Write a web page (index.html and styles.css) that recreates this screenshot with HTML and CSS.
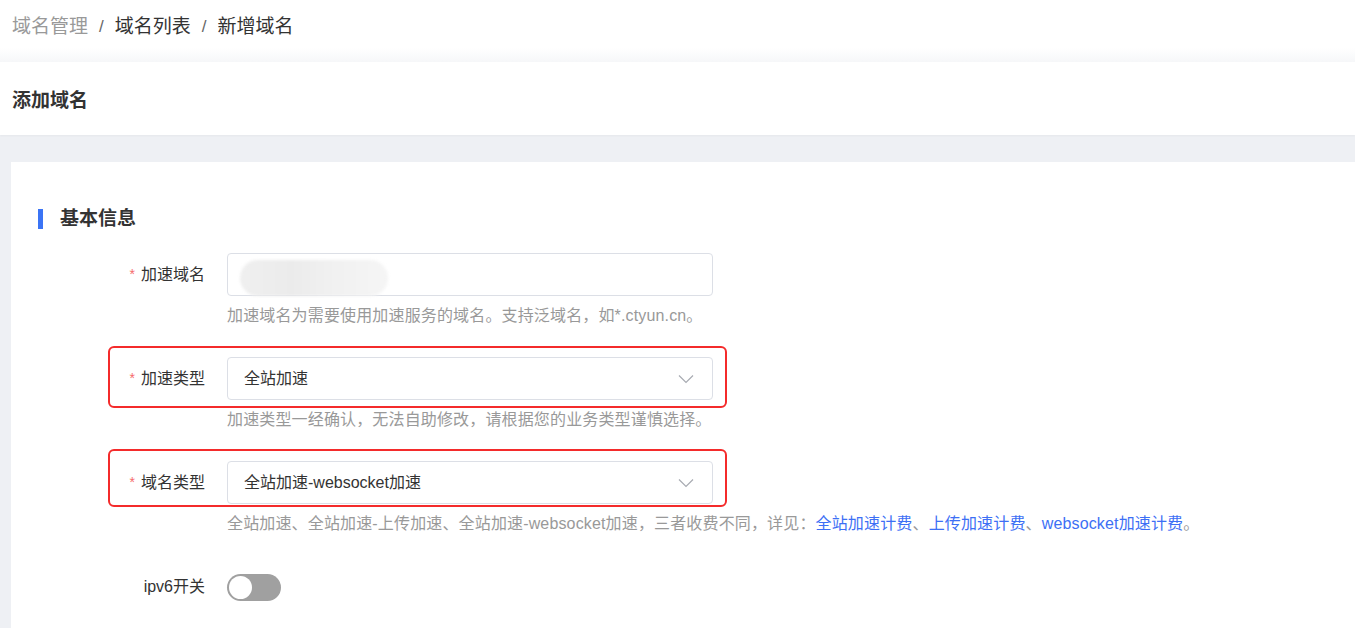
FILE: index.html
```html
<!DOCTYPE html>
<html lang="zh-CN">
<head>
  <meta charset="UTF-8">
  <meta name="viewport" content="width=device-width, initial-scale=1.0">
  <title>新增域名</title>
  <link rel="stylesheet" href="styles.css">
</head>
<body>
  <div class="crumbs">
    <span class="crumb muted">域名管理</span>
    <span class="sep">/</span>
    <span class="crumb">域名列表</span>
    <span class="sep">/</span>
    <span class="crumb">新增域名</span>
  </div>

  <div class="page-head">
    <h1>添加域名</h1>
  </div>

  <div class="main">
    <div class="card">
      <h2 class="section-title">基本信息</h2>

      <!-- 加速域名 -->
      <div class="form-item">
        <div class="form-line">
          <label class="label"><span class="req">*</span>加速域名</label>
          <div class="input">
            <span class="masked"></span>
          </div>
        </div>
        <div class="help">加速域名为需要使用加速服务的域名。支持泛域名，如*.ctyun.cn。</div>
      </div>

      <!-- 加速类型 -->
      <div class="form-item">
        <div class="form-line marked marked-a">
          <label class="label"><span class="req">*</span>加速类型</label>
          <div class="input select">
            <span>全站加速</span>
            <svg class="arrow" width="16" height="10" viewBox="0 0 16 10"><path d="M1 1.5 L8 8.5 L15 1.5" fill="none" stroke="#a8abb2" stroke-width="1.2"/></svg>
          </div>
        </div>
        <div class="help">加速类型一经确认，无法自助修改，请根据您的业务类型谨慎选择。</div>
      </div>

      <!-- 域名类型 -->
      <div class="form-item">
        <div class="form-line marked marked-b">
          <label class="label"><span class="req">*</span>域名类型</label>
          <div class="input select">
            <span>全站加速-websocket加速</span>
            <svg class="arrow" width="16" height="10" viewBox="0 0 16 10"><path d="M1 1.5 L8 8.5 L15 1.5" fill="none" stroke="#a8abb2" stroke-width="1.2"/></svg>
          </div>
        </div>
        <div class="help">全站加速、全站加速-上传加速、全站加速-websocket加速，三者收费不同，详见：<a href="#">全站加速计费</a>、<a href="#">上传加速计费</a>、<a href="#">websocket加速计费</a>。</div>
      </div>

      <!-- ipv6 -->
      <div class="form-item switch-item">
        <div class="form-line">
          <label class="label">ipv6开关</label>
          <span class="switch"><span class="knob"></span></span>
        </div>
      </div>
    </div>
  </div>
</body>
</html>
```

FILE: styles.css
```css
body {
  margin: 0;
  font-family: "Liberation Sans", "Noto Sans CJK SC", sans-serif;
  color: #333;
  background: #eef0f4;
}
.crumbs {
  height: 62px;
  padding: 0 12px;
  display: flex;
  align-items: flex-start;
  font-size: 19px;
  line-height: 53px;
  background: linear-gradient(#fff 48px, #f6f7f9 62px);
}
.crumb {
  color: #333;
}
.crumb.muted {
  color: #999;
}
.sep {
  color: #666;
  font-size: 17px;
  margin: 0 11px;
}
.page-head {
  background: #fff;
  height: 73px;
  padding: 0 12px;
  display: flex;
  align-items: center;
  box-shadow: 0 1px 2px rgba(0,0,0,0.04);
}
.page-head h1 {
  margin: 0;
  font-size: 19px;
  font-weight: bold;
  color: #333;
}
.main {
  padding: 27px 0 0 11px;
}
.card {
  background: #fff;
  padding: 47px 27px 30px;
  min-height: 500px;
}
.section-title {
  margin: 0 0 24px;
  font-size: 19px;
  line-height: 24px;
  font-weight: bold;
  color: #333;
  border-left: 5px solid #3b74f5;
  padding-left: 17px;
  height: 20px;
  display: flex;
  align-items: center;
}
.form-item {
  margin-bottom: 30px;
}
.form-line {
  display: flex;
  align-items: center;
}
.label {
  width: 167px;
  margin-right: 22px;
  padding-bottom: 4px;
  text-align: right;
  font-size: 16px;
  color: #333;
}
.req {
  color: #f56c6c;
  font-size: 14px;
  margin-right: 6px;
  vertical-align: 1px;
}
.input {
  width: 484px;
  height: 41px;
  border: 1px solid #dcdfe6;
  border-radius: 4px;
  box-sizing: content-box;
  display: flex;
  align-items: center;
  font-size: 16px;
}
.select {
  justify-content: space-between;
}
.select span {
  padding-left: 16px;
  padding-bottom: 3px;
}
.arrow {
  margin-right: 18px;
}
.masked {
  display: block;
  width: 148px;
  height: 36px;
  margin: 7px 0 0 12px;
  border-radius: 18px;
  background: linear-gradient(90deg, #efefef 0%, #ebebeb 35%, #f0f0f0 60%, #f5f5f5 100%);
  filter: blur(1.5px);
}
.help {
  margin-left: 189px;
  margin-top: 9px;
  font-size: 16px;
  line-height: 22px;
  letter-spacing: 0.15px;
  color: #999;
}
.help a {
  color: #3d6ff5;
  text-decoration: none;
}
.marked {
  position: relative;
  width: fit-content;
}
.marked::after {
  content: "";
  position: absolute;
  left: 70px;
  right: -14px;
  border: 2px solid #f42b2b;
  border-radius: 6px;
  pointer-events: none;
}
.marked-a::after {
  top: -11px;
  bottom: -8px;
}
.marked-b::after {
  top: -12px;
  bottom: -3px;
}
.switch-item {
  margin-top: 38px;
}
.switch {
  width: 54px;
  height: 27px;
  border-radius: 14px;
  background: #a0a0a0;
  display: flex;
  align-items: center;
  padding-left: 2px;
  box-sizing: border-box;
}
.knob {
  width: 23px;
  height: 23px;
  border-radius: 50%;
  background: #fff;
}
```
